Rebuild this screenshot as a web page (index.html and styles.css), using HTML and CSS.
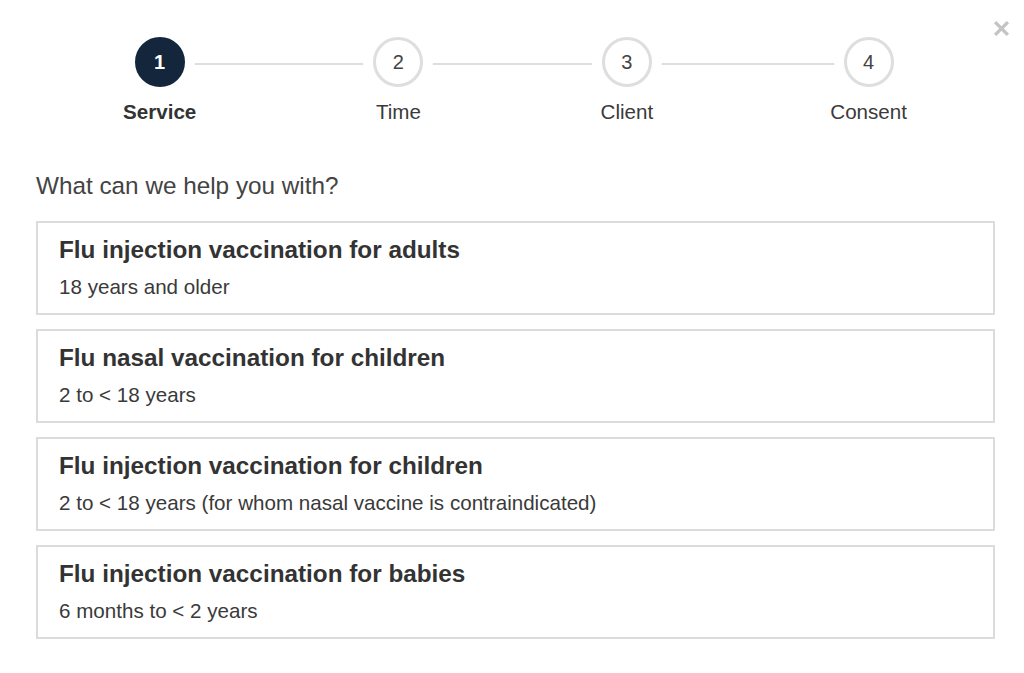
FILE: index.html
```html
<!DOCTYPE html>
<html lang="en">
<head>
<meta charset="utf-8">
<title>Book a flu vaccination</title>
<link rel="stylesheet" href="styles.css">
</head>
<body>
<div class="modal">
  <button class="close" aria-label="Close">
    <svg viewBox="0 0 16 16" width="17" height="17"><path d="M2 2 L14 14 M14 2 L2 14" stroke="#c4c4c4" stroke-width="3.2" stroke-linecap="butt"/></svg>
  </button>
  <div class="stepper">
    <div class="step s1 active"><div class="circle">1</div><div class="label">Service</div></div>
    <div class="line l1"></div>
    <div class="step s2"><div class="circle">2</div><div class="label">Time</div></div>
    <div class="line l2"></div>
    <div class="step s3"><div class="circle">3</div><div class="label">Client</div></div>
    <div class="line l3"></div>
    <div class="step s4"><div class="circle">4</div><div class="label">Consent</div></div>
  </div>
  <h2 class="question">What can we help you with?</h2>
  <div class="options">
    <div class="option"><div class="title">Flu injection vaccination for adults</div><div class="sub">18 years and older</div></div>
    <div class="option"><div class="title">Flu nasal vaccination for children</div><div class="sub">2 to &lt; 18 years</div></div>
    <div class="option"><div class="title">Flu injection vaccination for children</div><div class="sub">2 to &lt; 18 years (for whom nasal vaccine is contraindicated)</div></div>
    <div class="option"><div class="title">Flu injection vaccination for babies</div><div class="sub">6 months to &lt; 2 years</div></div>
  </div>
</div>
</body>
</html>
```
FILE: styles.css
```css
html, body {
  margin: 0;
  padding: 0;
  background: #fff;
  font-family: "Liberation Sans", Arial, sans-serif;
  color: #333;
}
.modal {
  position: relative;
  padding: 37px 29px 0 36px;
}
.close {
  position: absolute;
  top: 20px;
  right: 14px;
  border: 0;
  background: none;
  padding: 0;
  width: 17px;
  height: 17px;
  cursor: pointer;
}
.close svg { display: block; }
.stepper {
  display: grid;
  grid-template-columns: auto 1fr auto 1fr auto 1fr auto;
  margin: 0 88px 0 87px;
}
.step {
  grid-row: 1;
  display: flex;
  flex-direction: column;
  align-items: center;
}
.s1 { grid-column: 1; }
.s2 { grid-column: 3; }
.s3 { grid-column: 5; }
.s4 { grid-column: 7; }
.l1 { grid-column: 2; }
.l2 { grid-column: 4; }
.l3 { grid-column: 6; }
.line {
  grid-row: 1;
  height: 2px;
  background: #dedede;
  margin: 26px -40px 0;
  align-self: start;
}
.circle {
  position: relative;
  z-index: 1;
  box-sizing: border-box;
  width: 50px;
  height: 50px;
  border-radius: 50%;
  border: 3px solid #dedede;
  background: #fff;
  box-shadow: 0 0 0 10px #fff;
  display: flex;
  align-items: center;
  justify-content: center;
  font-size: 20px;
  color: #444;
}
.active .circle {
  background: #14263b;
  border-color: #14263b;
  color: #fff;
  font-weight: bold;
}
.label {
  position: relative;
  z-index: 1;
  margin-top: 13px;
  font-size: 20.6px;
  line-height: 24px;
  color: #3a3a3a;
  white-space: nowrap;
}
.active .label {
  font-weight: bold;
  color: #333;
}
.question {
  margin: 48px 0 21px;
  font-size: 24.3px;
  line-height: 28px;
  font-weight: normal;
  color: #444;
}
.options {
  display: flex;
  flex-direction: column;
  gap: 14px;
}
.option {
  border: 2px solid #dcdcdc;
  padding: 13px 21px 14px;
}
.title {
  font-size: 24.3px;
  line-height: 28px;
  font-weight: bold;
  color: #333;
}
.sub {
  margin-top: 11px;
  font-size: 20.6px;
  line-height: 24px;
  color: #3a3a3a;
}
```
